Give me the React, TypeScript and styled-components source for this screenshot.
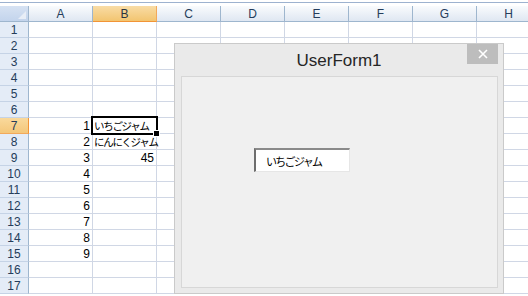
import React from "react";
import styled, { createGlobalStyle, css } from "styled-components";

const GlobalStyle = createGlobalStyle`
  html, body {
    margin: 0;
    padding: 0;
    background: #fff;
    overflow: hidden;
  }
  body {
    font-family: "Liberation Sans", "Noto Sans CJK JP", sans-serif;
  }
`;

const columns = ["A", "B", "C", "D", "E", "F", "G", "H"];
const rowCount = 17;

// cell contents keyed by "row:col"
const cells: Record<string, { text: string; align: "left" | "right"; jp?: boolean }> = {
  "7:A": { text: "1", align: "right" },
  "8:A": { text: "2", align: "right" },
  "9:A": { text: "3", align: "right" },
  "10:A": { text: "4", align: "right" },
  "11:A": { text: "5", align: "right" },
  "12:A": { text: "6", align: "right" },
  "13:A": { text: "7", align: "right" },
  "14:A": { text: "8", align: "right" },
  "15:A": { text: "9", align: "right" },
  "7:B": { text: "いちごジャム", align: "left", jp: true },
  "8:B": { text: "にんにくジャム", align: "left", jp: true },
  "9:B": { text: "45", align: "right" },
};

const Sheet = styled.div`
  position: relative;
  width: 528px;
  height: 296px;
  overflow: hidden;
  background: #fff;
`;

const TopStrip = styled.div`
  height: 2px;
  border-bottom: 1px solid #9db2cf;
  margin-bottom: 3px;
`;

const Grid = styled.div`
  display: grid;
  grid-template-columns: 29px repeat(8, 64px);
  grid-auto-rows: 16px;
`;

const Corner = styled.div`
  box-sizing: border-box;
  background: linear-gradient(#d6e2f3, #c3d4ec);
  border-right: 1px solid #9eb6ce;
  border-bottom: 1px solid #9eb6ce;
  display: flex;
  align-items: flex-end;
  justify-content: flex-end;
  padding: 0 2px 2px 0;
`;

const CornerMark = styled.div`
  width: 0;
  height: 0;
  border-left: 8px solid transparent;
  border-bottom: 8px solid #e8eef7;
`;

const ColHeader = styled.div<{ $active?: boolean }>`
  box-sizing: border-box;
  display: flex;
  align-items: center;
  justify-content: center;
  font-size: 12px;
  color: #253d5b;
  border-right: 1px solid #9eb6ce;
  border-bottom: 1px solid #9eb6ce;
  background: linear-gradient(#f9fbfd, #dfe7f2);
  ${(p) =>
    p.$active &&
    css`
      background: linear-gradient(#f9dca6, #f2c570);
      border-bottom: 1px solid #f29436;
      border-right: 1px solid #f2a95b;
      color: #2a3540;
    `}
`;

const RowHeader = styled.div<{ $active?: boolean }>`
  box-sizing: border-box;
  display: flex;
  align-items: center;
  justify-content: center;
  font-size: 12px;
  color: #253d5b;
  background: #e4ecf7;
  border-right: 1px solid #9eb6ce;
  border-bottom: 1px solid #c5d3e6;
  ${(p) =>
    p.$active &&
    css`
      background: linear-gradient(#f9d99c, #f4c77a);
      border-right: 1px solid #f29436;
      border-bottom: 1px solid #f2a95b;
    `}
`;

const Cell = styled.div<{ $align: "left" | "right"; $jp?: boolean; $selected?: boolean }>`
  box-sizing: border-box;
  position: relative;
  display: flex;
  align-items: center;
  justify-content: ${(p) => (p.$align === "right" ? "flex-end" : "flex-start")};
  padding: 0 2px 0 1px;
  border-right: 1px solid #d0d7e5;
  border-bottom: 1px solid #d0d7e5;
  white-space: nowrap;
  overflow: visible;
  font-size: 12px;
  color: #000;
  ${(p) =>
    p.$jp &&
    css`
      font-family: "Noto Sans CJK JP", sans-serif;
      font-size: 10.5px;
      letter-spacing: -1.3px;
    `}
  ${(p) =>
    p.$selected &&
    css`
      &::after {
        content: "";
        position: absolute;
        left: -2px;
        top: -2px;
        right: -2px;
        bottom: -2px;
        border: 2px solid #000;
        z-index: 2;
      }
      &::before {
        content: "";
        position: absolute;
        right: -4px;
        bottom: -4px;
        width: 5px;
        height: 5px;
        background: #000;
        border: 1px solid #fff;
        z-index: 3;
      }
    `}
`;

const Dialog = styled.div`
  position: absolute;
  left: 174px;
  top: 43px;
  width: 328px;
  height: 249px;
  border: 1px solid #cacaca;
  background: #eaeaea;
  display: flex;
  flex-direction: column;
`;

const TitleBar = styled.div`
  position: relative;
  height: 31px;
  display: flex;
  align-items: center;
  justify-content: center;
  font-size: 17px;
  color: #262626;
  padding-top: 1px;
`;

const CloseButton = styled.div`
  position: absolute;
  top: 0;
  right: 5px;
  width: 31px;
  height: 20px;
  background: #bdbdbd;
  display: flex;
  align-items: center;
  justify-content: center;
`;

const Client = styled.div`
  flex: 1;
  margin: 0 5px 5px 6px;
  border: 1px solid #d7d7d7;
  background: #f0f0f0;
  padding: 71px 0 0 72px;
`;

const TextBox = styled.div`
  box-sizing: border-box;
  width: 96px;
  height: 24px;
  background: #fff;
  border-top: 2px solid #8a8a8a;
  border-left: 2px solid #6e6e6e;
  border-right: 1px solid #e6e6e6;
  border-bottom: 1px solid #e6e6e6;
  display: flex;
  align-items: center;
  padding-left: 10px;
  font-family: "Noto Sans CJK JP", sans-serif;
  font-size: 11px;
  letter-spacing: -1.7px;
  color: #000;
`;

export default function App() {
  const rows = Array.from({ length: rowCount }, (_, i) => i + 1);
  return (
    <Sheet>
      <GlobalStyle />
      <TopStrip />
      <Grid>
        <Corner>
          <CornerMark />
        </Corner>
        {columns.map((c) => (
          <ColHeader key={c} $active={c === "B"}>
            {c}
          </ColHeader>
        ))}
        {rows.map((r) => (
          <React.Fragment key={r}>
            <RowHeader $active={r === 7}>{r}</RowHeader>
            {columns.map((c) => {
              const v = cells[`${r}:${c}`];
              return (
                <Cell
                  key={c}
                  $align={v ? v.align : "left"}
                  $jp={v?.jp}
                  $selected={r === 7 && c === "B"}
                >
                  {v?.text}
                </Cell>
              );
            })}
          </React.Fragment>
        ))}
      </Grid>
      <Dialog>
        <TitleBar>
          UserForm1
          <CloseButton>
            <svg width="10" height="10" viewBox="0 0 10 10">
              <path d="M1 1L9 9M9 1L1 9" stroke="#fff" strokeWidth="1.6" />
            </svg>
          </CloseButton>
        </TitleBar>
        <Client>
          <TextBox>いちごジャム</TextBox>
        </Client>
      </Dialog>
    </Sheet>
  );
}
